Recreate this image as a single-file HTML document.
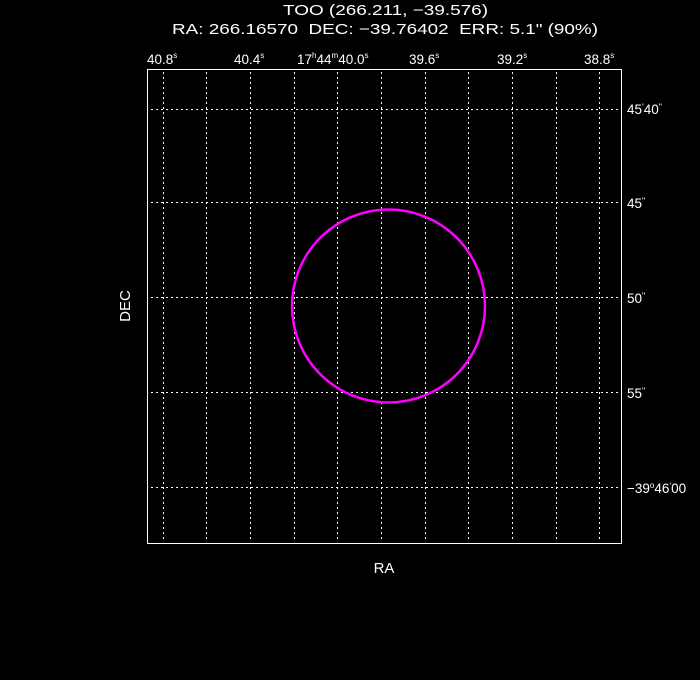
<!DOCTYPE html>
<html><head><style>
html,body{margin:0;padding:0;background:#000;width:700px;height:680px;overflow:hidden}
svg{display:block}
text{font-family:"Liberation Sans",sans-serif;fill:#fff;white-space:pre}
</style></head><body>
<svg width="700" height="680" viewBox="0 0 700 680" xmlns="http://www.w3.org/2000/svg" xml:space="preserve">
<rect width="700" height="680" fill="#000"/>
<text x="283" y="15" font-size="15" textLength="205" lengthAdjust="spacingAndGlyphs">TOO (266.211, −39.576)</text>
<text x="172" y="34" font-size="15" textLength="426" lengthAdjust="spacingAndGlyphs">RA: 266.16570&#160;&#160;DEC: −39.76402&#160;&#160;ERR: 5.1" (90%)</text>
<g font-size="13.5">
<text x="147" y="64">40.8<tspan font-size="8" dy="-6">s</tspan></text>
<text x="234" y="64">40.4<tspan font-size="8" dy="-6">s</tspan></text>
<text x="297" y="64">17<tspan font-size="8" dy="-6">h</tspan><tspan dy="6">44</tspan><tspan font-size="8" dy="-6">m</tspan><tspan dy="6">40.0</tspan><tspan font-size="8" dy="-6">s</tspan></text>
<text x="409" y="64">39.6<tspan font-size="8" dy="-6">s</tspan></text>
<text x="497" y="64">39.2<tspan font-size="8" dy="-6">s</tspan></text>
<text x="584" y="64">38.8<tspan font-size="8" dy="-6">s</tspan></text>
<text x="627" y="114">45<tspan font-size="9" dy="-4">'</tspan><tspan dy="4">40</tspan><tspan font-size="9" dy="-4">"</tspan></text>
<text x="627" y="208">45<tspan font-size="9" dy="-4">"</tspan></text>
<text x="627" y="303">50<tspan font-size="9" dy="-4">"</tspan></text>
<text x="627" y="398">55<tspan font-size="9" dy="-4">"</tspan></text>
<text x="627" y="493">−39<tspan font-size="8" dy="-5">o</tspan><tspan dy="5">46</tspan><tspan font-size="9" dy="-4">'</tspan><tspan dy="4">00</tspan></text>
</g>
<text x="384" y="573" font-size="15" text-anchor="middle">RA</text>
<text transform="translate(130,306) rotate(-90)" font-size="15" text-anchor="middle">DEC</text>
<g stroke="#fff" stroke-width="1" stroke-dasharray="2,3" fill="none">
<path d="M163.5 72V539M206.5 72V539M250.5 72V539M294.5 72V539M337.5 72V539M381.5 72V539M425.5 72V539M468.5 72V539M512.5 72V539M556.5 72V539M599.5 72V539"/>
<path d="M151 109.5H621M151 202.5H621M151 297.5H621M151 392.5H621M151 487.5H621"/>
</g>
<rect x="147.5" y="69.5" width="474" height="474" fill="none" stroke="#fff" stroke-width="1"/>
<circle cx="388.5" cy="306" r="96.5" fill="none" stroke="#ff00ff" stroke-width="2.5"/>
</svg>
</body></html>
